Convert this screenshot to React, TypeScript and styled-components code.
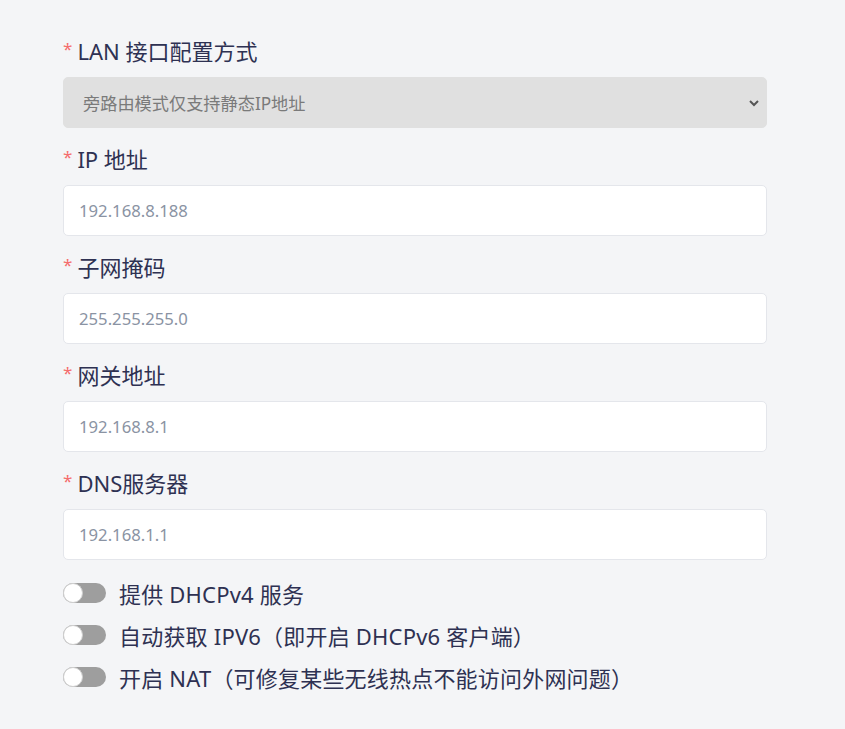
import React from "react";
import styled, { createGlobalStyle } from "styled-components";

const Global = createGlobalStyle`
  html, body { margin: 0; padding: 0; background: #f4f5f7; }
  body { font-family: "Noto Sans", "Noto Sans CJK SC", sans-serif; }
`;

const Page = styled.div`
  width: 845px;
  min-height: 729px;
  background: #f4f5f7;
  box-sizing: border-box;
  padding: 36px 78px 0 63px;
`;

const Field = styled.div`
  display: flex;
  flex-direction: column;
  margin-bottom: 16px;
`;

const Label = styled.div`
  height: 30px;
  line-height: 30px;
  margin-bottom: 11px;
  font-size: 22px;
  color: #2e3152;
  display: flex;
  align-items: center;
`;

const Star = styled.span`
  color: #f56c6c;
  font-size: 17px;
  margin-right: 5px;
  position: relative;
  top: -2px;
`;

const Box = styled.div<{ $disabled?: boolean }>`
  height: 51px;
  box-sizing: border-box;
  border-radius: 5px;
  border: 1px solid ${(p) => (p.$disabled ? "#e0e0e0" : "#e4e6eb")};
  background: ${(p) => (p.$disabled ? "#e0e0e0" : "#ffffff")};
  display: flex;
  align-items: center;
  justify-content: space-between;
  padding: 0 6px 0 ${(p) => (p.$disabled ? "19px" : "15px")};
  font-size: ${(p) => (p.$disabled ? "17.2px" : "16.7px")};
  color: ${(p) => (p.$disabled ? "#7a7a7a" : "#8a93a3")};
`;

const Toggles = styled.div`
  display: flex;
  flex-direction: column;
  gap: 21px;
  margin-top: 22px;
`;

const ToggleRow = styled.div`
  display: flex;
  align-items: center;
  height: 21px;
  font-size: 22px;
  letter-spacing: 0.2px;
  color: #2e3152;
`;

const Track = styled.div`
  width: 43px;
  height: 20px;
  border-radius: 10px;
  background: #9e9e9e;
  position: relative;
  margin-right: 13px;
  flex: none;
`;

const Knob = styled.div`
  position: absolute;
  left: 0;
  top: 0;
  width: 20px;
  height: 20px;
  box-sizing: border-box;
  border-radius: 50%;
  background: #fff;
  border: 1px solid #cfcfcf;
`;

const fields = [
  { label: "IP 地址", value: "192.168.8.188" },
  { label: "子网掩码", value: "255.255.255.0" },
  { label: "网关地址", value: "192.168.8.1" },
  { label: "DNS服务器", value: "192.168.1.1" },
];

const toggles = [
  "提供 DHCPv4 服务",
  "自动获取 IPV6（即开启 DHCPv6 客户端）",
  "开启 NAT（可修复某些无线热点不能访问外网问题）",
];

export default function App() {
  return (
    <Page>
      <Global />
      <Field>
        <Label>
          <Star>*</Star>LAN 接口配置方式
        </Label>
        <Box $disabled>
          <span>旁路由模式仅支持静态IP地址</span>
          <svg width="12" height="8" viewBox="0 0 12 8">
            <path d="M2 2 L6 6 L10 2" fill="none" stroke="#555" strokeWidth="2" />
          </svg>
        </Box>
      </Field>
      {fields.map((f) => (
        <Field key={f.label}>
          <Label>
            <Star>*</Star>
            {f.label}
          </Label>
          <Box>{f.value}</Box>
        </Field>
      ))}
      <Toggles>
        {toggles.map((t) => (
          <ToggleRow key={t}>
            <Track>
              <Knob />
            </Track>
            {t}
          </ToggleRow>
        ))}
      </Toggles>
    </Page>
  );
}
